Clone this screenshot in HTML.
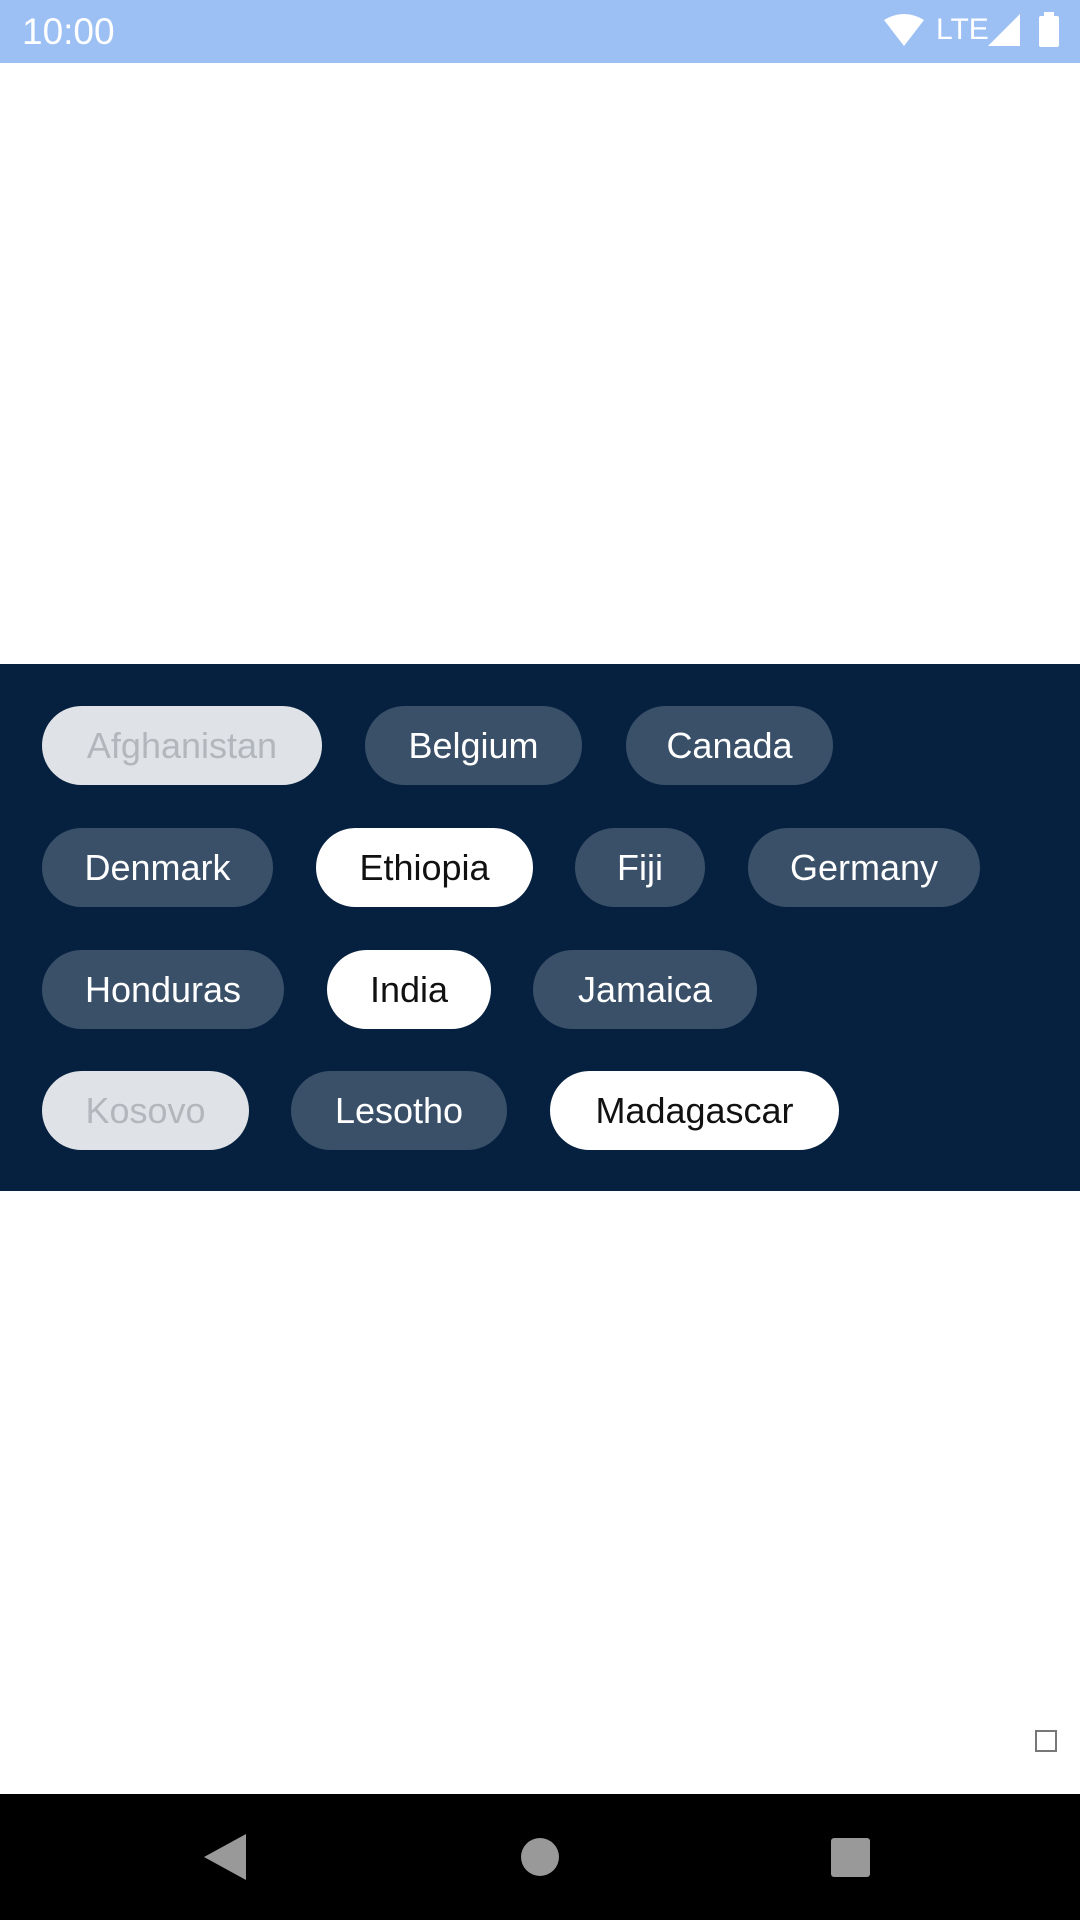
<!DOCTYPE html>
<html><head><meta charset="utf-8"><style>
body{margin:0;width:1080px;height:1920px;position:relative;background:#fff;font-family:"Liberation Sans",sans-serif;overflow:hidden}
.sb{position:absolute;left:0;top:0;width:1080px;height:63px;background:#9cc0f4}
.time{position:absolute;left:22px;top:11px;color:#fff;font-size:37px}
.panel{position:absolute;left:0;top:664px;width:1080px;height:527px;background:#06213f}
.c{position:absolute;height:79px;border-radius:40px;background:#3a5069;color:#fff;font-size:36px;display:flex;align-items:center;justify-content:center}
.w{background:#fff;color:#111}
.d{background:#dfe3e7;color:#b2b7bd}
.nav{position:absolute;left:0;top:1794px;width:1080px;height:126px;background:#000}
</style></head><body>
<div class="sb"><div class="time">10:00</div>
<svg style="position:absolute;left:884px;top:14px" width="40" height="32"><path d="M0 6 Q20 -6 40 6 L20 32Z" fill="#fff"/></svg>
<div style="position:absolute;left:936px;top:13px;color:#fff;font-size:30px">LTE</div>
<svg style="position:absolute;left:988px;top:14px" width="32" height="32"><path d="M32 0V32H0Z" fill="#fff"/></svg>
<div style="position:absolute;left:1039px;top:16px;width:20px;height:31px;background:#fff;border-radius:2px"></div>
<div style="position:absolute;left:1044px;top:12px;width:10px;height:5px;background:#fff"></div>
</div>
<div class="panel"></div>
<div class="c d" style="left:42px;top:706px;width:280px">Afghanistan</div>
<div class="c" style="left:365px;top:706px;width:217px">Belgium</div>
<div class="c" style="left:626px;top:706px;width:207px">Canada</div>
<div class="c" style="left:42px;top:828px;width:231px">Denmark</div>
<div class="c w" style="left:316px;top:828px;width:217px">Ethiopia</div>
<div class="c" style="left:575px;top:828px;width:130px">Fiji</div>
<div class="c" style="left:748px;top:828px;width:232px">Germany</div>
<div class="c" style="left:42px;top:950px;width:242px">Honduras</div>
<div class="c w" style="left:327px;top:950px;width:164px">India</div>
<div class="c" style="left:533px;top:950px;width:224px">Jamaica</div>
<div class="c d" style="left:42px;top:1071px;width:207px">Kosovo</div>
<div class="c" style="left:291px;top:1071px;width:216px">Lesotho</div>
<div class="c w" style="left:550px;top:1071px;width:289px">Madagascar</div>
<div style="position:absolute;left:1035px;top:1730px;width:18px;height:18px;border:2px solid #777"></div>
<div class="nav">
<svg style="position:absolute;left:204px;top:40px" width="42" height="46"><path d="M42 0V46L0 23Z" fill="#999"/></svg>
<div style="position:absolute;left:521px;top:1838px;margin-top:-1794px;width:38px;height:38px;border-radius:50%;background:#999"></div>
<div style="position:absolute;left:831px;top:44px;width:39px;height:39px;background:#999;border-radius:3px"></div>
</div>
</body></html>
